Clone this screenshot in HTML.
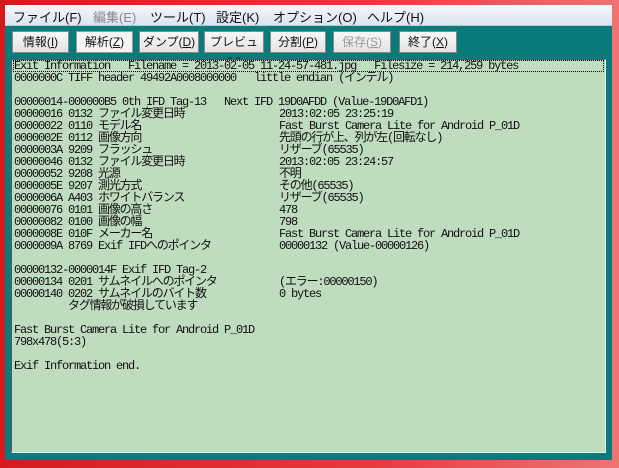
<html><head><style>
body{margin:0;width:619px;height:468px;overflow:hidden;background:#d9191e;position:relative;font-family:"Liberation Sans","Noto Sans CJK JP",sans-serif}
.fr{position:absolute;left:0;top:0;width:619px;height:468px;background:linear-gradient(90deg,#d41a1f,#e63a3e 60%,#ee7474)}
.menu{position:absolute;left:5px;top:5px;width:607px;height:20px;background:linear-gradient(#f4f6fb,#dde4f2);border-bottom:1px solid #b9c9d9;font-size:13px;color:#111}
.menu span{position:absolute;top:2px}
.teal{position:absolute;left:5px;top:26px;width:607px;height:434px;background:#0a7b7b}
.b{position:absolute;top:31px;height:22px;background:linear-gradient(#f7f7f7,#e4e4e4);border:1px solid #888;box-sizing:border-box;font-size:12px;text-align:center;line-height:20px;color:#111}
.b u{text-decoration:underline}
.ta{position:absolute;left:11px;top:59px;width:595px;height:394px;background:#bfdcbf;border-top:1px solid #556;border-left:1px solid #556;border-bottom:1px solid #e0f5f5;border-right:1px solid #e0f5f5;box-sizing:border-box}
.t{position:absolute;left:14px;top:60px;font-family:"Liberation Mono","Noto Sans CJK JP",monospace;font-size:12px;letter-spacing:-1.2px;line-height:12px;color:#111;white-space:pre}
.t div{height:12px;position:relative}
.t i{font-style:normal;position:absolute;left:265px;top:0}
.sel{position:absolute;left:13px;top:60px;width:591px;height:12px;border:1px dotted #000;box-sizing:border-box}
</style></head><body>
<div class="fr"></div>
<div class="menu"><span style="left:8px">ファイル(F)</span><span style="left:88px;color:#8a8a8a">編集(E)</span><span style="left:145px">ツール(T)</span><span style="left:211px">設定(K)</span><span style="left:268px">オプション(O)</span><span style="left:362px">ヘルプ(H)</span></div>
<div class="teal"></div>
<div class="b" style="left:12px;width:57px">情報(<u>I</u>)</div>
<div class="b" style="left:76px;width:57px;background:#f4f4f4;border-color:#999">解析(<u>Z</u>)</div>
<div class="b" style="left:139px;width:60px">ダンプ(<u>D</u>)</div>
<div class="b" style="left:204px;width:60px">プレビュ(<u>V</u>)</div>
<div class="b" style="left:270px;width:56px">分割(<u>P</u>)</div>
<div class="b" style="left:333px;width:58px;color:#999">保存(<u>S</u>)</div>
<div class="b" style="left:399px;width:58px">終了(<u>X</u>)</div>
<div class="ta"></div>
<div class="sel"></div>
<div class="t"><div>Exit Information   Filename = 2013-02-05 11-24-57-481.jpg   Filesize = 214,259 bytes</div><div>0000000C TIFF header 49492A0008000000   little endian (インテル)</div><div> </div><div>00000014-000000B5 0th IFD Tag-13   Next IFD 19D0AFDD (Value-19D0AFD1)</div><div>00000016 0132 ファイル変更日時<i>2013:02:05 23:25:19</i></div><div>00000022 0110 モデル名<i>Fast Burst Camera Lite for Android P_01D</i></div><div>0000002E 0112 画像方向<i>先頭の行が上、列が左(回転なし)</i></div><div>0000003A 9209 フラッシュ<i>リザーブ(65535)</i></div><div>00000046 0132 ファイル変更日時<i>2013:02:05 23:24:57</i></div><div>00000052 9208 光源<i>不明</i></div><div>0000005E 9207 測光方式<i>その他(65535)</i></div><div>0000006A A403 ホワイトバランス<i>リザーブ(65535)</i></div><div>00000076 0101 画像の高さ<i>478</i></div><div>00000082 0100 画像の幅<i>798</i></div><div>0000008E 010F メーカー名<i>Fast Burst Camera Lite for Android P_01D</i></div><div>0000009A 8769 Exif IFDへのポインタ<i>00000132 (Value-00000126)</i></div><div> </div><div>00000132-0000014F Exif IFD Tag-2</div><div>00000134 0201 サムネイルへのポインタ<i>(エラー:00000150)</i></div><div>00000140 0202 サムネイルのバイト数<i>0 bytes</i></div><div>         タグ情報が破損しています</div><div> </div><div>Fast Burst Camera Lite for Android P_01D</div><div>798x478(5:3)</div><div> </div><div>Exif Information end.</div></div>
</body></html>
